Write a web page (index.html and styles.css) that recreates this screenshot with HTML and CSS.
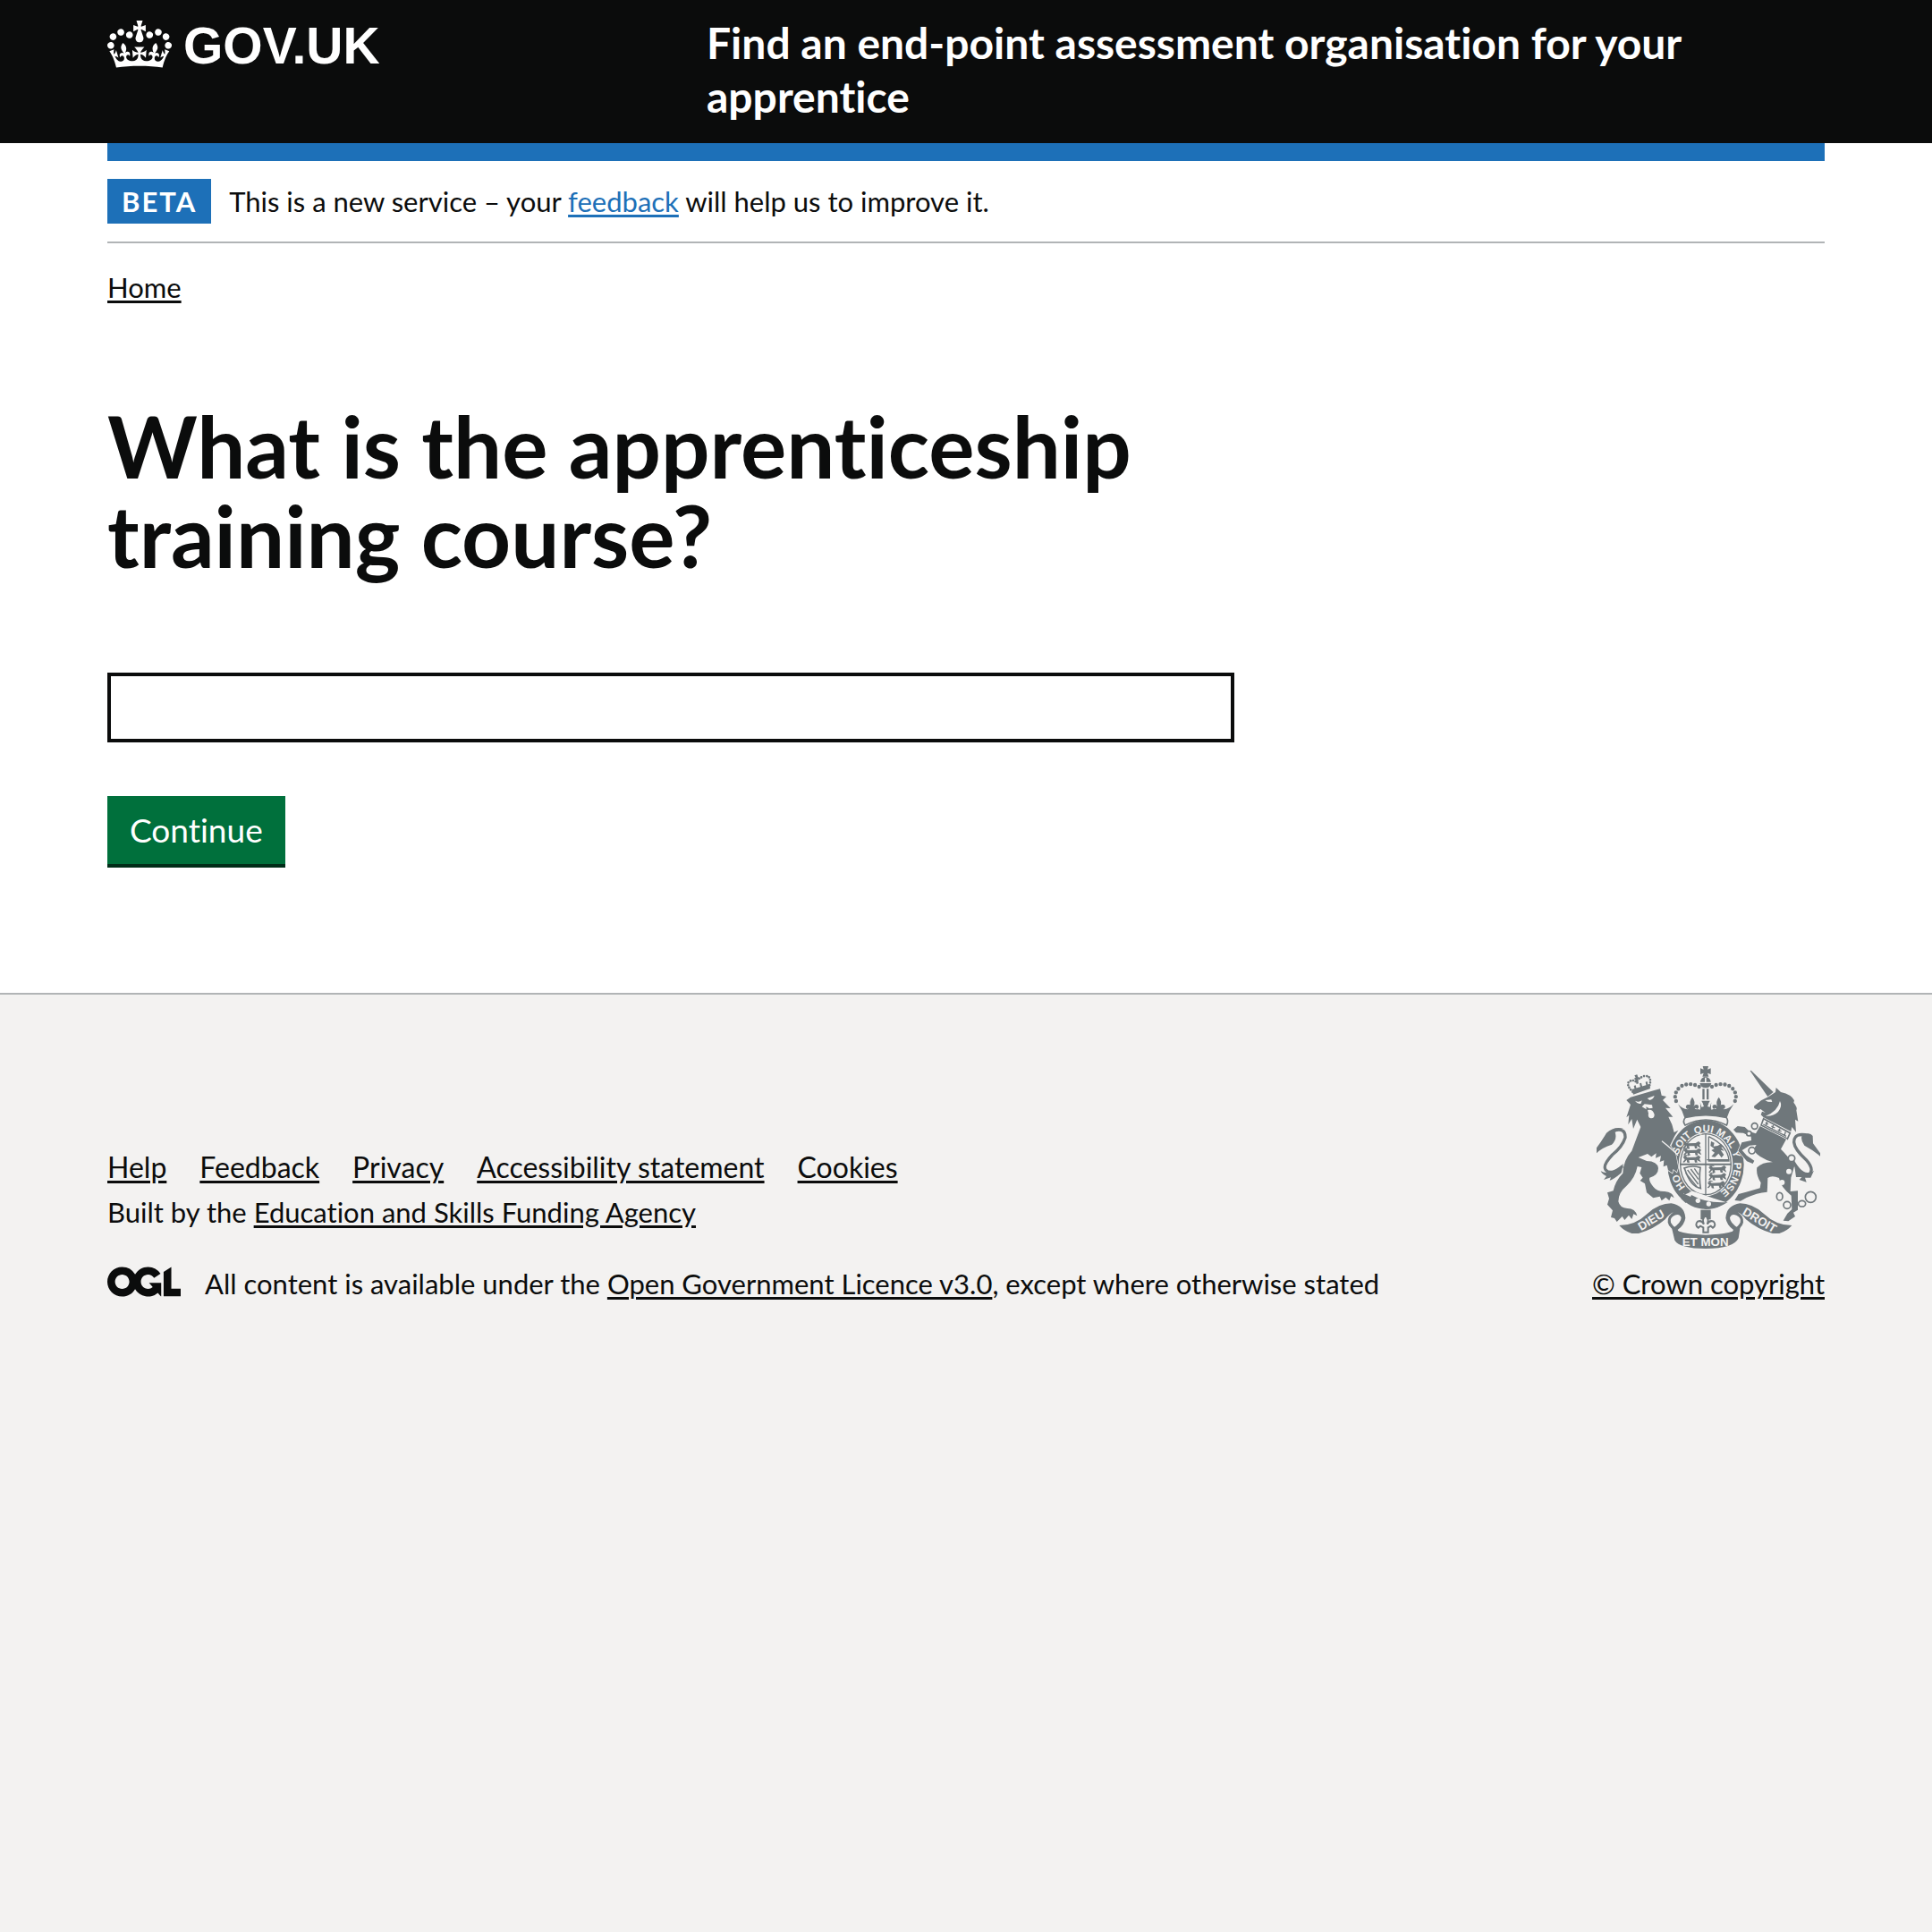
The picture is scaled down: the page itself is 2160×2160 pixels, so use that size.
FILE: index.html
```html
<!DOCTYPE html>
<html lang="en">
<head>
<meta charset="utf-8">
<meta name="viewport" content="width=device-width, initial-scale=1">
<title>What is the apprenticeship training course?</title>
<link rel="stylesheet" href="styles.css">
</head>
<body>
<header class="header">
  <div class="container header-row">
    <a class="logo" href="#">
      <svg class="logo-crown" viewBox="0 0 132 97" aria-hidden="true"><path fill="currentColor" fill-rule="evenodd" d="M25 30.2c3.5 1.5 7.7-.2 9.1-3.7 1.5-3.6-.2-7.8-3.9-9.2-3.6-1.4-7.6.3-9.1 3.9-1.4 3.5.3 7.5 3.9 9zM9 39.5c3.6 1.5 7.8-.2 9.2-3.7 1.5-3.6-.2-7.8-3.9-9.1-3.6-1.5-7.6.2-9.1 3.8-1.4 3.5.3 7.5 3.8 9zM4.4 57.2c3.5 1.5 7.7-.2 9.1-3.8 1.5-3.6-.2-7.7-3.9-9.1-3.5-1.5-7.6.3-9.1 3.8-1.4 3.5.3 7.6 3.9 9.1zm38.3-21.4c3.5 1.5 7.7-.2 9.1-3.8 1.5-3.6-.2-7.7-3.9-9.1-3.6-1.5-7.6.3-9.1 3.8-1.3 3.6.4 7.7 3.9 9.1zm64.4-5.6c-3.6 1.5-7.8-.2-9.1-3.7-1.5-3.6.2-7.8 3.8-9.2 3.6-1.4 7.7.3 9.2 3.9 1.3 3.5-.4 7.5-3.9 9zm15.9 9.3c-3.6 1.5-7.7-.2-9.1-3.7-1.5-3.6.2-7.8 3.7-9.1 3.6-1.5 7.7.2 9.2 3.8 1.5 3.5-.3 7.5-3.8 9zm4.7 17.7c-3.6 1.5-7.8-.2-9.2-3.8-1.5-3.6.2-7.7 3.9-9.1 3.6-1.5 7.7.3 9.2 3.8 1.3 3.5-.4 7.6-3.9 9.1zM89.3 35.8c-3.6 1.5-7.8-.2-9.2-3.8-1.4-3.6.2-7.7 3.9-9.1 3.6-1.5 7.7.3 9.2 3.8 1.4 3.6-.3 7.7-3.9 9.1zM69.7 17.7l8.9 4.7V9.3l-8.9 2.8c-.2-.3-.5-.6-.9-.9L72.4 0H59.6l3.5 11.2c-.3.3-.6.5-.9.9l-8.8-2.8v13.1l8.8-4.7c.3.3.6.7.9.9l-5 15.4v.1c-.2.8-.4 1.6-.4 2.4 0 4.1 3.1 7.5 7 8.1h.2c.3 0 .7.1 1 .1.4 0 .7 0 1-.1h.2c4-.6 7.1-4.1 7.1-8.1 0-.8-.1-1.7-.4-2.4V34l-5.1-15.4c.4-.2.7-.6 1-.9zM66 92.8c16.9 0 32.8 1.1 47.1 3.2 4-16.9 8.9-26.7 14-33.5l-9.6-3.4c1 4.9 1.1 7.2 0 10.2-1.5-1.4-3-4.3-4.2-8.7L108.6 76c2.8-2 5-3.2 7.5-3.3-4.4 9.4-10 11.9-13.6 11.2-4.3-.8-6.3-4.6-5.6-7.9 1-4.7 5.7-5.9 8-.5 4.3-8.7-3-11.4-7.6-8.8 7.1-7.2 7.9-13.5 2.1-21.1-8 6.1-8.1 12.3-4.5 20.8-4.7-5.4-12.1-2.5-9.5 6.2 3.4-5.2 7.9-2 7.2 3.1-.6 4.3-6.4 7.8-13.5 7.2-10.3-.9-10.9-8-11.2-13.8 2.5-.5 7.1 1.8 11 7.3L80.2 60c-4.1 4.4-8 5.3-12.3 5.4 1.4-4.4 8-11.6 8-11.6H55.5s6.4 7.2 7.9 11.6c-4.2-.1-8-1-12.3-5.4l1.4 16.4c3.9-5.5 8.5-7.7 10.9-7.3-.3 5.8-.9 12.8-11.1 13.8-7.2.6-12.9-2.9-13.5-7.2-.7-5 3.8-8.3 7.1-3.1 2.7-8.7-4.6-11.6-9.4-6.2 3.7-8.5 3.6-14.7-4.6-20.8-5.8 7.6-5 13.9 2.2 21.1-4.7-2.6-11.9.1-7.7 8.8 2.3-5.5 7.1-4.2 8.1.5.7 3.3-1.3 7.1-5.7 7.9-3.5.7-9-1.8-13.5-11.2 2.5.1 4.7 1.3 7.5 3.3l-4.7-15.4c-1.2 4.4-2.7 7.2-4.3 8.7-1.1-3-.9-5.3 0-10.2l-9.5 3.4c5 6.9 9.9 16.7 14 33.5 14.8-2.1 30.8-3.2 47.7-3.2z"/></svg>
      <span class="logo-text">GOV.UK</span>
    </a>
    <a class="service-name" href="#">Find an end-point assessment organisation for your apprentice</a>
  </div>
</header>

<div class="page">
  <div class="container">
    <div class="phase-banner">
      <strong class="tag">BETA</strong>
      <span>This is a new service – your <a class="link-blue" href="#">feedback</a> will help us to improve it.</span>
    </div>
    <nav class="breadcrumbs" aria-label="Breadcrumb"><a href="#">Home</a></nav>
    <main class="main">
      <form class="form">
        <h1 class="title"><label for="course">What is the apprenticeship training course?</label></h1>
        <input class="text-input" id="course" name="course" type="text">
        <button class="button" type="submit">Continue</button>
      </form>
    </main>
  </div>
</div>

<footer class="footer">
  <div class="container footer-row">
    <div class="footer-main">
      <ul class="footer-links">
        <li><a href="#">Help</a></li>
        <li><a href="#">Feedback</a></li>
        <li><a href="#">Privacy</a></li>
        <li><a href="#">Accessibility statement</a></li>
        <li><a href="#">Cookies</a></li>
      </ul>
      <p class="built-by">Built by the <a href="#">Education and Skills Funding Agency</a></p>
      <div class="licence">
        <svg class="ogl" viewBox="0 0 483.2 195.7" aria-hidden="true"><path fill="currentColor" d="M421.5 142.8V.1l-50.7 32.3v161.1h112.4v-50.7zm-122.3-9.6A47.12 47.12 0 0 1 221 97.8c0-26 21.1-47.1 47.1-47.1 16.7 0 31.4 8.7 39.7 21.8l42.7-27.2A97.63 97.63 0 0 0 268.1 0c-36.5 0-68.3 20.1-85.1 49.7A98 98 0 0 0 97.8 0C43.9 0 0 43.9 0 97.8s43.9 97.8 97.8 97.8c36.5 0 68.3-20.1 85.1-49.7a97.76 97.76 0 0 0 149.6 25.4l19.4 22.2h3v-87.8h-80l24.3 27.5zM97.8 145c-26 0-47.1-21.1-47.1-47.1s21.1-47.1 47.1-47.1 47.1 21.1 47.1 47.1S123.8 145 97.8 145"/></svg>
        <span>All content is available under the <a href="#">Open Government Licence v3.0</a>, except where otherwise stated</span>
      </div>
    </div>
    <a class="copyright" href="#">
      <svg class="crest" viewBox="72 66 750 612" aria-hidden="true">
        <defs>
          <path id="garter" d="M438 503A96 108 0 0 1 438 287A96 108 0 0 1 438 503"/>
          <path id="fleur" d="M0-26Q13-10 4 6Q10-4 18 0Q26 8 16 14L12 10L4 16V24H-4V16L-12 10L-16 14Q-26 8-18 0Q-10-4-4 6Q-13-10 0-26Z"/>
          <path id="passant" d="M-32-8L-24-14L-18-8L10-9L20-15L27-9L23-3L28 8L20 4L14 0L16 9L8 9L6 1L-12 1L-10 10L-18 9L-20 0L-28 9L-33 8L-26-1Z M-32-12Q-20-22-12-12L-18-13Z"/>
          <path id="ribbon" d="M148 600Q201 600 243 560Q282 526 322 526Q367 533 370 575Q367 598 343 616L330 608Q356 590 356 574Q350 559 334 566Q317 573 321 590Q326 601 343 612L348 624Q315 610 311 590Q309 568 330 556Q317 560 302 580Q264 613 213 627H190Q164 619 148 600Z"/>
        </defs>
        <g class="ink">
          <!-- royal crown -->
          <path d="M428 66H447L444 77L455 73V93L444 89L448 101H427L431 89L420 93V73L431 77Z"/>
          <path d="M437 101Q454 104 455 119H440V104H435V119H420Q421 104 437 101ZM418 123H457Q454 139 438 139Q421 139 418 123ZM427 142H434V178H427ZM441 142H448V178H441Z"/>
          <g class="dots">
            <path d="M416 135Q386 118 354 134Q323 161 344 193"/>
            <path d="M459 135Q490 118 521 134Q552 161 531 193"/>
          </g>
          <path d="M345 193Q359 210 377 211Q385 203 376 196Q391 192 398 207Q408 215 421 207L430 204L421 212L419 188L430 196L424 182H452L446 196L457 188L455 212L445 204Q467 215 478 207Q485 192 500 196Q491 203 499 211Q516 210 532 193Q517 214 509 239Q438 223 367 239Q360 215 345 193Z"/>
          <path class="paper" d="M402 207L420 190L424 203L432 201L426 187L420 190L419 212ZM474 207L456 190L452 203L444 201L450 187L456 190L457 212Z"/>
          <use href="#fleur" x="393" y="196"/><use href="#fleur" x="482" y="196"/>
          <path class="line" d="M370 238Q438 222 507 238Q516 250 508 264Q438 228 369 264Q359 251 370 238Z"/>

          <!-- garter -->
          <ellipse cx="438" cy="396" rx="128" ry="149"/>
          <ellipse class="paper" cx="438" cy="395" rx="91" ry="107"/>
          <ellipse cx="438" cy="395" rx="87" ry="104"/>
          <ellipse class="paper" cx="438" cy="395" rx="83" ry="100"/>
          <path d="M436 292H440V392H523V398H440V500H456L420 500L436 494V398H351V392H436Z"/>
          <use href="#passant" x="394" y="333"/><use href="#passant" x="396" y="356"/><use href="#passant" x="394" y="380"/>
          <use href="#passant" x="480" y="414"/><use href="#passant" x="480" y="439"/><use href="#passant" x="476" y="466"/>
          <path class="thin" d="M448 302V384H516Q514 335 448 302M442 380H518"/>
          <path d="M456 318L467 323L464 335L478 333L489 327L499 336L490 338L500 350L488 347L499 363L491 373L481 359L469 371L457 369L468 356L457 348L467 343L454 333Z"/>
          <path class="line" d="M366 408Q390 397 420 406Q415 440 421 476Q387 470 368 412Z"/>
          <path class="thin" d="M377 414L413 462M388 411L414 446M400 409L414 430M371 424L408 470"/>
          <path class="paper" d="M362 493L395 485L465 509L517 526L492 533L440 522L389 505Z"/>
          <path d="M364 479Q378 477 384 490L370 496L365 508L385 514L371 525L355 510L372 500L360 488ZM390 498Q440 527 512 522Q470 549 438 545Q406 537 380 519Z"/>
          <circle class="paper" cx="412" cy="517" r="8"/><circle class="paper" cx="448" cy="528" r="8"/>
          <g class="motto">
            <text><textPath href="#garter" startOffset="16%">HO</textPath></text>
            <text><textPath href="#garter" startOffset="36%">SOIT</textPath></text>
            <text><textPath href="#garter" startOffset="49%">QUI</textPath></text>
            <text><textPath href="#garter" startOffset="61%">MAL</textPath></text>
            <text><textPath href="#garter" startOffset="70%">Y</textPath></text>
            <text><textPath href="#garter" startOffset="83%">PENSE</textPath></text>
          </g>

          <!-- lion -->
          <path class="dots dots-small" d="M193 152Q169 128 182 117Q194 110 205 119Q210 107 232 99Q250 97 252 113Q253 128 244 141"/>
          <path d="M199 97L208 94L211 103L216 105L210 111L213 124L206 126L202 112L197 108L203 104ZM190 144L250 126L252 141L195 161ZM197 132L203 130L206 142L200 144ZM216 124L222 122L226 138L220 140ZM236 119L242 117L245 131L239 133Z"/>
          <path class="halo" d="M172 180L186 170L268 146L285 142L290 164L306 168L294 180L320 207L303 206L328 236L313 236L325 262L332 288L346 281L334 300L318 332L336 355L346 405L341 421L329 411L326 424L312 415L308 398L296 403L298 382L284 387L288 367L270 374L272 358L256 370L243 360L212 372L240 384Q276 385 279 408Q279 432 250 440Q246 452 262 470Q275 487 300 486Q328 488 332 508L322 502L316 517L304 506L290 517L284 503L262 508L240 490L234 460L218 450L227 440L217 425L223 405L209 402Q202 440 172 468Q145 490 145 520Q150 542 175 543Q202 543 208 568L196 562L190 579L180 566L166 582L158 570L140 588L132 576L120 573L126 550L108 530L114 510L108 490L128 484Q135 450 160 425Q162 380 190 350L220 270L208 245L195 276L190 243L178 262L181 230L172 238L186 195Z"/>
          <path d="M161 275Q130 267 105 290Q90 316 72 340V358Q88 340 123 329Q142 311 134 287Z"/>
          <path class="tail" d="M134 281Q170 273 168 306Q158 337 125 363Q92 398 102 413Q119 435 159 401"/>
          <path d="M86 418Q101 426 113 421Q136 422 162 393L155 424Q127 448 116 449L120 439L96 447L105 435Q91 429 86 418Z"/>
          <path class="paper" d="M201 182Q214 189 224 181L221 191Q210 195 201 182ZM242 174L266 165Q263 177 250 180ZM224 202L233 193L258 196L260 206L249 208L238 202L239 211Z"/>
          <path class="paper" d="M243 213Q260 208 266 228Q266 242 254 241Q243 238 246 224Z"/>
          <path class="paper-line" d="M291 317Q325 344 345 365"/>

          <!-- unicorn -->
          <path d="M587 82L590 80L665 153L646 168Z"/>
          <path d="M600 200L624 181L648 169L672 153L674 138L690 153Q726 161 735 181L733 188Q747 205 742 214L748 251L738 245L741 287L727 270L724 285L632 238L623 229L627 218L638 222L622 210L615 214L601 207Z"/>
          <path class="paper" d="M637 180L658 178L661 186L646 185ZM687 183Q696 199 681 219Q665 235 639 233Q680 217 687 183Z"/>
          <path class="line" d="M632 242L721 290L712 310L624 264Z"/>
          <path class="thin" d="M631 261L708 301M644 252L640 266M638 256L648 261M665 263L660 277M658 267L670 273M687 275L682 289M680 279L692 285M706 286L702 298"/>
          <path class="halo" d="M620 267L708 311L690 344Q712 366 736 399L724 440L722 486L747 484V548L732 557L738 570L715 586L698 584L712 560L727 546L725 500Q688 470 684 441Q660 430 646 441L645 472L644 488Q609 491 575 507L555 518L535 516L548 495L579 487L620 475L623 457Q606 430 610 406Q629 387 663 388Q614 374 598 346L608 330L585 332L560 348L575 365L601 383L596 393L576 385L547 350L559 322L591 315L590 302L564 290L540 289L531 279L545 267L569 270L585 285L606 292Z"/>
          <path d="M761 298Q787 285 797 300L798 325L822 358V368Q799 348 769 332Q755 314 761 298Z"/>
          <path class="tail" d="M784 299Q734 286 734 321Q736 345 775 380Q802 411 787 427Q755 437 721 366"/>
          <path d="M735 395Q761 431 791 424L801 416L790 440L771 440L776 455L752 447L760 438L741 438Z"/>
          <circle class="ring" cx="602" cy="267" r="10"/><circle class="ring paper" cx="583" cy="292" r="8"/><circle class="ring paper" cx="593" cy="349" r="11"/>
          <circle class="ring paper" cx="726" cy="375" r="11"/><circle class="paper" cx="717" cy="419" r="9"/><circle class="paper" cx="694" cy="456" r="9"/>
          <ellipse class="ring" cx="686" cy="503" rx="10" ry="13"/><circle class="ring" cx="711" cy="532" r="12"/><ellipse class="ring" cx="761" cy="527" rx="12" ry="10"/><circle class="ring" cx="790" cy="505" r="18"/>

          <!-- ribbons -->
          <use href="#ribbon"/>
          <use href="#ribbon" transform="matrix(-1 0 0 1 875 0)"/>
          <path d="M323 604Q345 630 438 632Q533 630 554 604L548 643Q532 678 438 678Q350 677 334 650Z"/>
          <path d="M421 548H455V580H421Z"/>
          <path class="fleur-line" d="M437 566Q451 580 443 596Q451 581 464 587Q475 599 462 608L455 602L446 607V623H430V607L420 602L413 608Q400 599 411 587Q424 581 432 596Q424 580 437 566Z"/>
          <g class="motto motto-large">
            <text x="262" y="594" transform="rotate(-31 262 594)">DIEU</text>
            <text x="612" y="594" transform="rotate(31 612 594)">DROIT</text>
            <text x="437" y="668">ET MON</text>
          </g>
        </g>
      </svg>
      <span class="copyright-text">© Crown copyright</span>
    </a>
  </div>
</footer>
</body>
</html>
```
FILE: styles.css
```css
* { box-sizing: border-box; }

body {
  margin: 0;
  background: #f3f2f1;
  color: #0b0c0c;
  font-family: Lato, "Liberation Sans", sans-serif;
  font-size: 31px;
  line-height: 50px;
  font-variant-ligatures: none;
}

a {
  color: inherit;
  text-decoration-thickness: 3px;
  text-underline-offset: 3px;
}

.container { margin: 0 120px; }

/* Header */
.header { background: #0b0c0c; color: #fff; }
.header-row {
  display: grid;
  grid-template-columns: 1fr 2fr;
  align-items: start;
}
.logo {
  display: flex;
  gap: 13px;
  padding-top: 23px;
  text-decoration: none;
}
.logo-crown { width: 72px; height: 53px; }
.logo-text {
  font: bold 57px/57px "Liberation Sans", Arial, sans-serif;
}
.service-name {
  padding: 18px 0 22px 30px;
  font-size: 48px;
  font-weight: 700;
  line-height: 60px;
  text-decoration: none;
}

/* Page */
.page { background: #fff; border-bottom: 2px solid #b1b4b6; }
.phase-banner {
  display: flex;
  gap: 20px;
  padding: 20px 0;
  border-top: 20px solid #1d70b8;
  border-bottom: 2px solid #b1b4b6;
}
.tag {
  padding: 0 16px;
  background: #1d70b8;
  color: #fff;
  letter-spacing: 2px;
}
.link-blue { color: #1d70b8; }
.breadcrumbs { padding-top: 24px; }
.main { padding: 102px 0 144px; }
.form {
  display: flex;
  flex-direction: column;
  align-items: flex-start;
  width: calc(66% - 7px);
}
.title {
  margin: 0 0 104px;
  font-size: 96px;
  line-height: 100px;
}
.text-input {
  width: 100%;
  height: 78px;
  margin-bottom: 60px;
  padding: 8px;
  border: 4px solid #0b0c0c;
  border-radius: 0;
  background: #fff;
  font: inherit;
}
.button {
  padding: 13px 25px;
  border: 0;
  background: #00703c;
  box-shadow: 0 4px 0 #002d18;
  color: #fff;
  font: inherit;
  font-size: 37px;
}

/* Footer */
.footer { padding: 80px 0; }
.footer-row {
  display: flex;
  justify-content: space-between;
  align-items: flex-end;
}
.footer-links {
  display: flex;
  gap: 37px;
  margin: 0;
  padding: 0;
  font-size: 32px;
  list-style: none;
}
.built-by { margin: 0 0 30px; }
.licence { display: flex; gap: 27px; }
.ogl { width: 82px; height: 34px; margin-top: 6px; }
.copyright {
  display: flex;
  flex-direction: column;
  align-items: center;
  gap: 14px;
}

/* Crest */
.crest { width: 250px; height: 204px; }
.ink { fill: #6f777b; }
.paper { fill: #f3f2f1; }
.line, .ring, .tail, .thin, .dots, .fleur-line { fill: none; stroke: #6f777b; }
.line { stroke-width: 5; fill: #f3f2f1; }
.fleur-line { stroke-width: 6; fill: #f3f2f1; }
.thin { stroke-width: 4; }
.ring { stroke-width: 5; }
.ring.paper { fill: #f3f2f1; }
.tail { stroke-width: 10; }
.dots { stroke-width: 13; stroke-linecap: round; stroke-dasharray: 0 15; }
.dots-small { stroke-width: 8; stroke-dasharray: 0 9; }
.halo { stroke: #f3f2f1; stroke-width: 4; paint-order: stroke; }
.paper-line { fill: none; stroke: #f3f2f1; stroke-width: 4; }
.motto {
  fill: #f3f2f1;
  font-family: "Liberation Sans", Arial, sans-serif;
  font-size: 34px;
  font-weight: 700;
  text-anchor: middle;
}
.motto-large { font-size: 40px; }
```
